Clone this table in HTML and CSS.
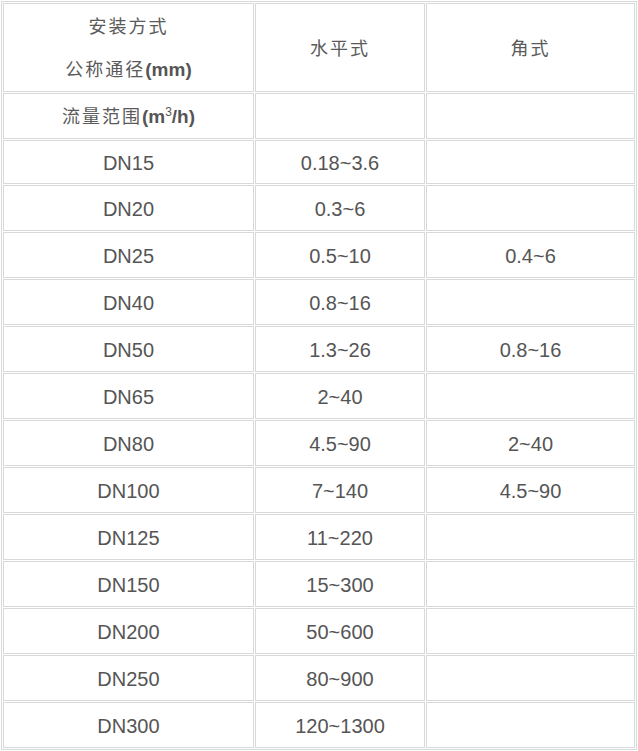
FILE: index.html
```html
<!DOCTYPE html>
<html lang="zh">
<head>
<meta charset="utf-8">
<title>流量范围</title>
<link rel="stylesheet" href="styles.css">
</head>
<body>
<table class="spec">
  <colgroup>
    <col class="c1"><col class="c2"><col class="c3">
  </colgroup>
  <tr class="r-head">
    <td><div class="cn">安装方式</div><div class="cn">公称通径<b class="en">(mm)</b></div></td>
    <td><span class="cn">水平式</span></td>
    <td><span class="cn">角式</span></td>
  </tr>
  <tr class="r-sub">
    <td><span class="cn">流量范围<b class="en">(m<sup>3</sup>/h)</b></span></td>
    <td></td>
    <td></td>
  </tr>
  <tr class="r-first"><td>DN15</td><td>0.18~3.6</td><td></td></tr>
  <tr class="r-data"><td>DN20</td><td>0.3~6</td><td></td></tr>
  <tr class="r-data"><td>DN25</td><td>0.5~10</td><td>0.4~6</td></tr>
  <tr class="r-data"><td>DN40</td><td>0.8~16</td><td></td></tr>
  <tr class="r-data"><td>DN50</td><td>1.3~26</td><td>0.8~16</td></tr>
  <tr class="r-data"><td>DN65</td><td>2~40</td><td></td></tr>
  <tr class="r-data"><td>DN80</td><td>4.5~90</td><td>2~40</td></tr>
  <tr class="r-data"><td>DN100</td><td>7~140</td><td>4.5~90</td></tr>
  <tr class="r-data"><td>DN125</td><td>11~220</td><td></td></tr>
  <tr class="r-data"><td>DN150</td><td>15~300</td><td></td></tr>
  <tr class="r-data"><td>DN200</td><td>50~600</td><td></td></tr>
  <tr class="r-data"><td>DN250</td><td>80~900</td><td></td></tr>
  <tr class="r-data"><td>DN300</td><td>120~1300</td><td></td></tr>
</table>
</body>
</html>
```
FILE: styles.css
```css
html, body {
  margin: 0;
  padding: 0;
  background: #ffffff;
}
body {
  padding: 1px;
}
.spec {
  width: 636px;
  border: 1px solid #d9d9d9;
  border-collapse: separate;
  border-spacing: 1px;
  table-layout: fixed;
  font-family: "Liberation Sans", Arial, sans-serif;
  font-size: 20px;
  color: #555555;
}
.c1 { width: 251px; }
.c2 { width: 170px; }
.c3 { width: 209px; }
.spec td {
  border: 1px solid #d9d9d9;
  padding: 0;
  text-align: center;
  vertical-align: middle;
  line-height: 24px;
}
.r-head { height: 87px; }
.r-head td { line-height: 43px; }
.r-sub { height: 46px; }
.r-first { height: 44px; }
.r-data { height: 46px; }
.r-first td, .r-data td { padding-top: 1px; }
.cn {
  font-family: "Noto Sans CJK SC", "Liberation Sans", sans-serif;
  font-size: 18px;
  letter-spacing: 2px;
  color: #5a5a5a;
}
.en {
  font-family: "Liberation Sans", Arial, sans-serif;
  font-weight: bold;
  font-size: 19px;
  letter-spacing: 0;
  color: #555555;
}
.en sup {
  font-size: 12px;
  font-weight: normal;
  line-height: 0;
  vertical-align: 7px;
}
```
